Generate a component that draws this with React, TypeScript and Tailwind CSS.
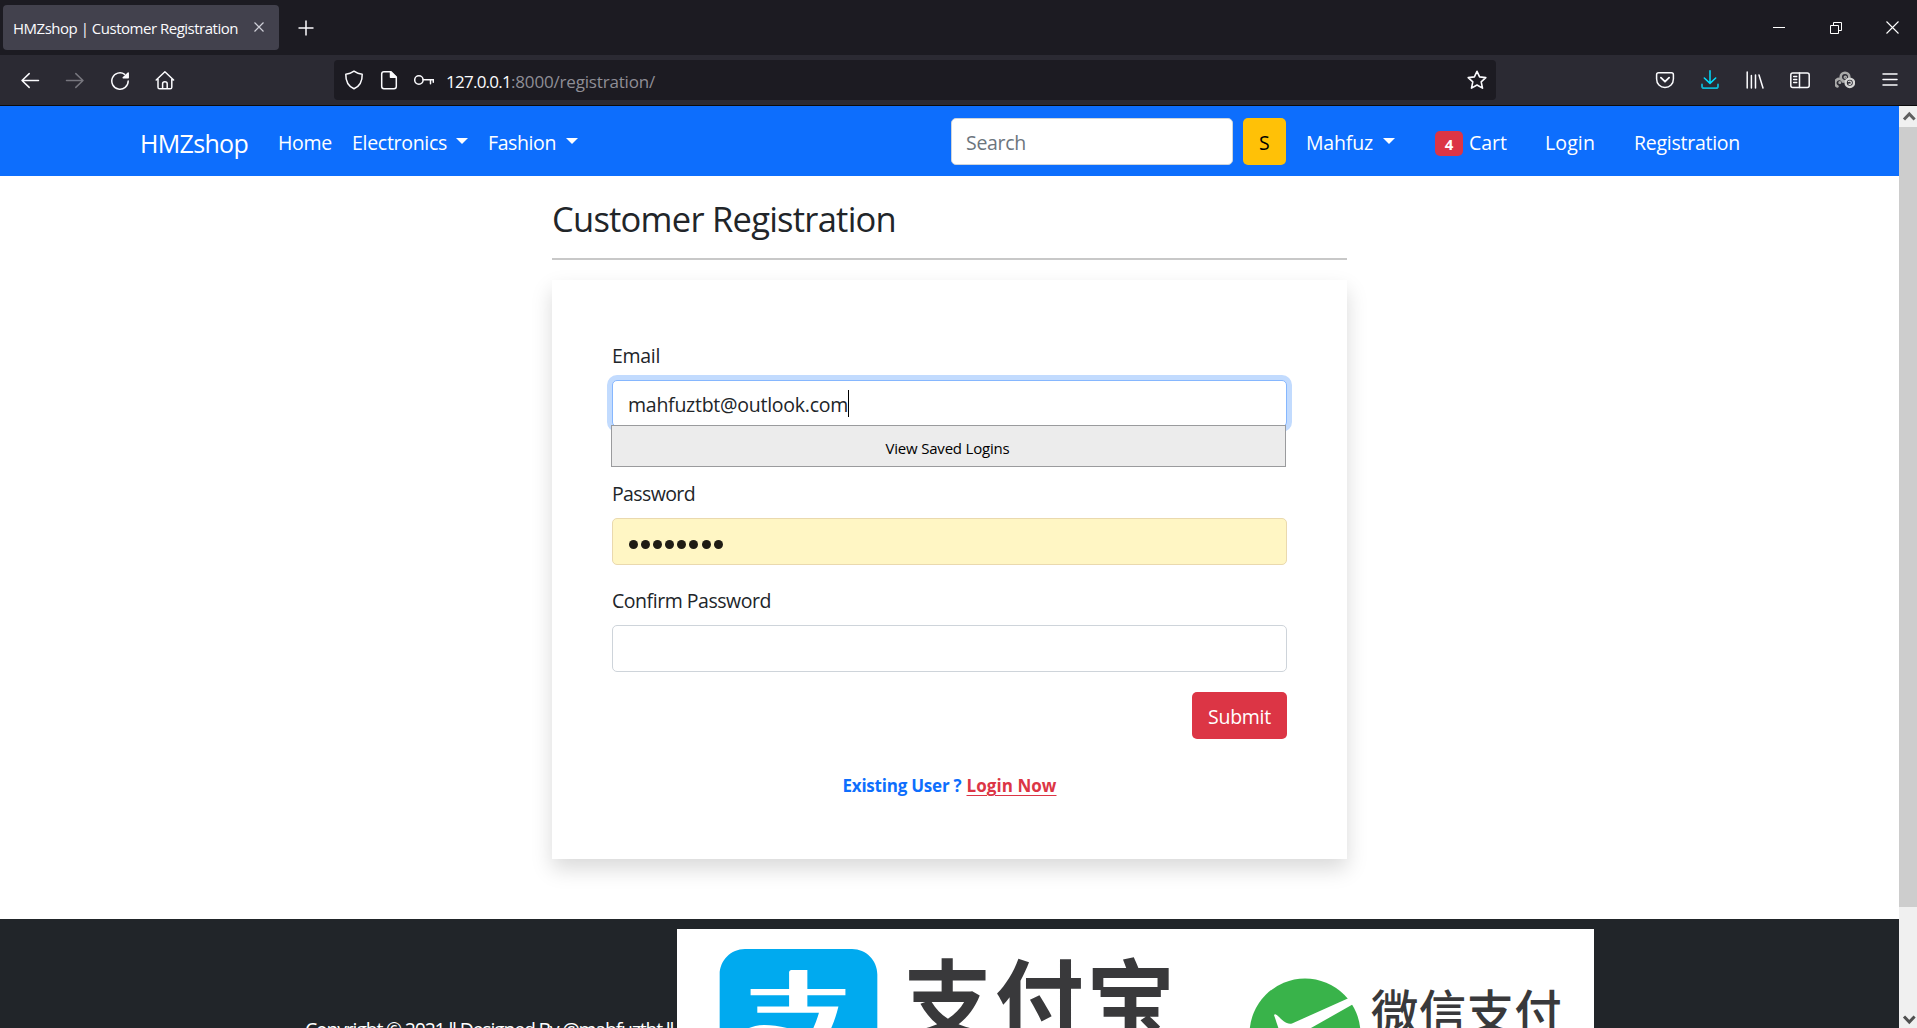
import { useLayoutEffect, useRef, useState } from "react";
import type { ReactNode } from "react";
import { SiAlipay } from "react-icons/si";

/** One line of text whose tracking is adjusted so that it fills an exact width. */
function Line({ w, className = "", children }: { w: number; className?: string; children: string }) {
  const ref = useRef<HTMLSpanElement>(null);
  const [tracking, setTracking] = useState(0);
  useLayoutEffect(() => {
    const el = ref.current;
    if (!el) return;
    el.style.letterSpacing = "0px";
    const natural = el.getBoundingClientRect().width;
    const next = (w - natural) / children.length;
    el.style.letterSpacing = `${next}px`;
    setTracking(next);
  }, [w, children]);
  return (
    <span ref={ref} className={`inline-block shrink-0 whitespace-nowrap ${className}`} style={{ letterSpacing: tracking }}>
      {children}
    </span>
  );
}

function Icon({ size = 20, children, className = "" }: { size?: number; children: ReactNode; className?: string }) {
  return (
    <svg
      width={size}
      height={size}
      viewBox={`0 0 ${size} ${size}`}
      fill="none"
      stroke="currentColor"
      strokeWidth="1.5"
      strokeLinecap="round"
      strokeLinejoin="round"
      className={`shrink-0 ${className}`}
    >
      {children}
    </svg>
  );
}

function ToolButton({ children }: { children: ReactNode }) {
  return <button className="flex h-10 w-[45px] shrink-0 items-center justify-center text-[#fbfbfe]">{children}</button>;
}

function Caret({ className = "" }: { className?: string }) {
  return <span className={`border-x-6 border-t-6 border-x-transparent border-t-white ${className}`} />;
}

function TabStrip() {
  return (
    <div className="flex h-[55px] items-start bg-[#1c1b22] pl-[3px] pt-[5px] text-[#fbfbfe]">
      <div className="flex h-[45px] w-[276px] items-center rounded-[4px] bg-[#42414d] pl-2.5 pt-0.5">
        <Line w={225} className="text-[15px]">HMZshop | Customer Registration</Line>
        <svg width="10" height="10" viewBox="0 0 10 10" stroke="#cfcfd8" strokeWidth="1.2" className="mb-[3px] ml-[16px]">
          <path d="M.5.5l9 9M9.5.5l-9 9" />
        </svg>
      </div>
      <svg width="16" height="16" viewBox="0 0 16 16" stroke="currentColor" strokeWidth="1.5" className="ml-[19px] mt-[15px]">
        <path d="M8 .5v15M.5 8h15" />
      </svg>
      <div className="-mt-[5px] ml-auto flex h-[55px] w-[167px] items-center">
        <div className="flex w-[57px] justify-center">
          <span className="h-px w-3 bg-white" />
        </div>
        <div className="flex w-[57px] justify-center">
          <svg width="12" height="12" viewBox="0 0 12 12" fill="none" stroke="white" strokeWidth="1">
            <path d="M.5 3.5h8v8h-8zM3.5 3.5v-3h8v8h-3" />
          </svg>
        </div>
        <div className="flex w-[53px] justify-center pl-[3px]">
          <svg width="13" height="13" viewBox="0 0 13 13" stroke="white" strokeWidth="1.1">
            <path d="M.5.5l12 12M12.5.5l-12 12" />
          </svg>
        </div>
      </div>
    </div>
  );
}

function Toolbar() {
  return (
    <div className="flex h-[51px] items-start border-b border-[#0c0c0d] bg-[#2b2a33] pl-[7px] pr-[5px] pt-[5px] text-[#fbfbfe]">
      <ToolButton>
        <Icon>
          <path d="M18.5 10.5H2M9.2 3.6L2 10.5l7.2 6.9" />
        </Icon>
      </ToolButton>
      <ToolButton>
        <Icon className="text-[#77767e]">
          <path d="M1.5 10.5H18M10.8 3.6l7.2 6.9-7.2 6.9" />
        </Icon>
      </ToolButton>
      <ToolButton>
        <Icon>
          <path d="M18.2 11A8.2 8.2 0 1 1 14.7 4.3" />
          <path d="M18.2 3v4.8h-5z" fill="currentColor" />
        </Icon>
      </ToolButton>
      <ToolButton>
        <Icon>
          <path d="M1.2 10L9.900 1.800 18.600 10M3 9v8.200c0 1 .6 1.600 1.600 1.600h10.600c1 0 1.600-.6 1.600-1.600V9M7.600 18.500V13.700c0-1.200.8-2 2.300-2s2.300.8 2.300 2v4.800" />
        </Icon>
      </ToolButton>
      <div className="ml-[147px] flex h-10 w-[1162px] items-center rounded-[4px] bg-[#1c1b22] pl-2.5">
        <Icon className="mr-[15px]">
          <path d="M10 1.200c2.300 1.700 5 2.700 8.200 3 .2 6.600-2.300 11.900-8.200 14.600C4.100 16.100 1.600 10.800 1.800 4.200 5 3.900 7.700 2.900 10 1.200z" />
        </Icon>
        <Icon className="mr-[15px]">
          <path d="M12 1.800H5C3.500 1.800 2.700 2.600 2.700 4v12.500c0 1.400.8 2.200 2.300 2.200h10c1.500 0 2.300-.8 2.300-2.200V7z" />
          <path d="M11.500 2v5.300h5.500z" fill="currentColor" />
        </Icon>
        <Icon>
          <circle cx="4.900" cy="10" r="4.200" />
          <path d="M9.200 9.700h10.300M16.500 9.700v4M19.300 9.700v2.500" />
        </Icon>
        <div className="ml-[12px] pt-1 text-[17px] leading-6">
          <Line w={65}>127.0.0.1</Line>
          <Line w={144} className="text-[#8f8e96]">:8000/registration/</Line>
        </div>
        <Icon className="ml-auto mr-[9px]">
          <path d="M10 1.300l2.600 5.600 6.200.7-4.600 4.200 1.300 6.300-5.500-3.100-5.500 3.100 1.300-6.300L1.200 7.600l6.200-.7z" strokeWidth="1.600" />
        </Icon>
      </div>
      <div className="ml-auto flex">
        <ToolButton>
          <Icon>
            <path d="M3.600 2.700h12.800c1.200 0 2 .8 2 2V9c0 4.700-3.500 8.400-8.400 8.400S1.600 13.700 1.600 9V4.700c0-1.200.8-2 2-2z" />
            <path d="M5.900 7.700L10 11.700l4.100-4" strokeWidth="1.800" />
          </Icon>
        </ToolButton>
        <ToolButton>
          <Icon className="text-[#00ddff]">
            <path d="M10 .8v12.400M4.300 8l5.700 5.400L15.700 8" />
            <path d="M2 14.500v1.800c0 1.200.7 1.900 1.900 1.900h12.200c1.200 0 1.900-.7 1.900-1.900v-1.800" stroke="#0fb5d2" strokeWidth="1.800" />
          </Icon>
        </ToolButton>
        <ToolButton>
          <Icon>
            <path d="M2.200 2v16M6.400 5.500V18M10.500 5V18M14 5l4 13" />
          </Icon>
        </ToolButton>
        <ToolButton>
          <Icon>
            <rect x=".8" y="3" width="18.400" height="14.500" rx="2" />
            <path d="M9.500 3v14.500M3.700 6.500h3M3.700 9.500h3M3.700 12.500h3" />
          </Icon>
        </ToolButton>
        <ToolButton>
          <Icon className="text-[#a9a9a9]">
            <path d="M2.500 16.500A4 4 0 1 1 8 11.500" strokeWidth="2.600" />
            <circle cx="4.800" cy="12.500" r=".8" />
            <circle cx="10" cy="7" r="4.300" strokeWidth="2.600" />
            <circle cx="10.300" cy="7.300" r="1.100" strokeWidth="1.400" />
            <circle cx="14.800" cy="12.800" r="4.200" fill="#2b2a33" stroke="#d6d6d6" strokeWidth="2.400" />
            <path d="M13.500 11.500c1.500-1 3 0 2.800 1.500s-1.800 1.600-2.300 1" stroke="#dcdcdc" strokeWidth="1.300" />
          </Icon>
        </ToolButton>
        <ToolButton>
          <Icon>
            <path d="M3 4h14M3 9.500h14M3 15h14" />
          </Icon>
        </ToolButton>
      </div>
    </div>
  );
}

function Navbar() {
  return (
    <nav className="flex h-[70px] items-center bg-[#0d6efd] pl-[140px] text-[19.5px] leading-[30px] text-white">
      <Line w={108} className="pt-1 text-[25px]">HMZshop</Line>
      <Line w={54} className="ml-[30px] pt-[3px]">Home</Line>
      <Line w={95} className="ml-[20px] pt-[3px]">Electronics</Line>
      <Caret className="mb-px ml-[9px]" />
      <Line w={68} className="ml-[20px] pt-[3px]">Fashion</Line>
      <Caret className="mb-px ml-[10px]" />
      <div className="ml-auto flex h-[47px] w-[282px] items-center rounded-[5px] border border-[#ced4da] bg-white pl-[14px] pt-[3px] text-[#6c757d]">
        <Line w={60}>Search</Line>
      </div>
      <button className="ml-2.5 flex h-[47px] w-[43px] items-center justify-center rounded-[5px] bg-[#ffc107] pt-[3px] text-black">
        <Line w={11}>S</Line>
      </button>
      <Line w={67} className="ml-[20px] pt-[3px]">Mahfuz</Line>
      <Caret className="mb-px ml-[10px]" />
      <span className="ml-[40px] mt-1 flex h-[25px] w-7 items-center justify-center rounded-[5px] bg-[#dc3545] pt-0.5 text-[15px] font-bold leading-none">4</span>
      <Line w={38} className="ml-[6px] pt-[3px]">Cart</Line>
      <Line w={50} className="ml-[38px] pt-[3px]">Login</Line>
      <Line w={106} className="ml-[39px] mr-[159px] pt-[3px]">Registration</Line>
    </nav>
  );
}

function RegistrationForm() {
  return (
    <main className="ml-[552px] flex h-[743px] w-[795px] shrink-0 flex-col text-[#212529]">
      <h1 className="mt-[18px] flex h-[64px] items-start text-[34.5px] leading-[50px]">
        <Line w={344}>Customer Registration</Line>
      </h1>
      <hr className="h-0.5 border-0 bg-[#c8c8c8]" />
      <form className="mt-5 flex h-[579px] flex-col bg-white px-[60px] text-[19.5px] leading-[30px] shadow-[0_10px_20px_rgba(0,0,0,0.15)]">
        <label className="mt-[61px]">
          <Line w={48}>Email</Line>
        </label>
        <div className="relative mt-[9px] h-[47px] rounded-[5px] border border-[#86b7fe] bg-white shadow-[0_0_0_5px_#c2dbfe]">
          <div className="flex h-full items-center pl-[15px] pt-[3px]">
            <Line w={220}>mahfuztbt@outlook.com</Line>
            <span className="-mt-1 h-[27px] w-px bg-black" />
          </div>
          <div className="absolute -left-0.5 top-[44px] flex h-[42px] w-[675px] items-center justify-center border border-[#9a9b9d] bg-[#ececec] pr-0.5 pt-[3px] text-[15px] text-black">
            <Line w={124}>View Saved Logins</Line>
          </div>
        </div>
        <label className="mt-[52px]">
          <Line w={83}>Password</Line>
        </label>
        <div className="mt-[9px] flex h-[47px] items-center gap-[3.1px] rounded-[5px] border border-[#ead9ae] bg-[#fff6c4] pl-[16px] pt-[5px]">
          {Array.from({ length: 8 }, (_, i) => (
            <span key={i} className="size-[9px] rounded-full bg-[#1f1c14]" />
          ))}
        </div>
        <label className="mt-[21px]">
          <Line w={159}>Confirm Password</Line>
        </label>
        <div className="mt-[9px] h-[47px] rounded-[5px] border border-[#ced4da]" />
        <button type="button" className="mt-5 flex h-[47px] w-[95px] items-center justify-center self-end rounded-[5px] bg-[#dc3545] pt-0.5 text-white">
          <Line w={63}>Submit</Line>
        </button>
        <div className="mt-[32px] flex justify-center text-[17px] font-bold text-[#0d6efd]">
          <Line w={119}>Existing User ?</Line>
          <a className="ml-[5px] text-[#dc3545]">
            <Line w={90} className="underline decoration-1 underline-offset-[3px]">Login Now</Line>
          </a>
        </div>
      </form>
    </main>
  );
}

function PaymentBanner() {
  return (
    <div className="flex h-[300px] w-[917px] items-start bg-white pl-[42px] pt-5 font-['Noto_Sans_CJK_SC',sans-serif] text-[#39393b]">
      <SiAlipay size={159} color="#00aaef" className="shrink-0" />
      <div className="ml-[25px] mt-[-13px] text-[89px] font-bold leading-[120px]">
        <Line w={275}>支付宝</Line>
      </div>
      <svg width="112" height="112" viewBox="0 0 112 112" className="ml-[71px] mt-[29px] shrink-0">
        <circle cx="56" cy="56" r="55.500" fill="#39b34a" />
        <path d="M25 37c1-2 3 0 4 1 4 4 9 9 14 7.500L101 19.500l6 5L62 50 39 62c-6 3-8-8-14-25z" fill="white" />
      </svg>
      <div className="ml-[10px] mt-[26px] text-[47.5px] font-medium leading-[70px]">
        <Line w={191}>微信支付</Line>
      </div>
    </div>
  );
}

function Footer() {
  return (
    <footer className="flex h-[109px] items-start overflow-hidden bg-[#212529] pl-[305px] pt-2.5 text-white">
      <Line w={372} className="mt-[86px] whitespace-pre text-[19.5px] leading-[30px]">Copyright © 2021 ll Designed By @mahfuztbt ll </Line>
      <PaymentBanner />
    </footer>
  );
}

function ScrollBar() {
  return (
    <div className="flex w-[18px] shrink-0 flex-col items-center bg-[#f0f0f0]">
      <svg width="18" height="21" viewBox="0 0 18 21" fill="none" stroke="#606060" strokeWidth="3" className="shrink-0">
        <path d="M5 13.500l5.300-5.500 5.300 5.500" />
      </svg>
      <div className="h-[780px] w-full bg-[#cdcdcd]" />
      <svg width="18" height="18" viewBox="0 0 18 18" fill="none" stroke="#505050" strokeWidth="3" className="mt-auto shrink-0">
        <path d="M5 6.500l5.300 5.500L15.600 6.500" />
      </svg>
    </div>
  );
}

export default function App() {
  return (
    <div className="flex h-[1028px] w-[1917px] flex-col overflow-hidden bg-white font-['Open_Sans','Noto_Sans',sans-serif]">
      <TabStrip />
      <Toolbar />
      <div className="flex min-h-0 flex-1">
        <div className="flex w-[1899px] flex-col">
          <Navbar />
          <RegistrationForm />
          <Footer />
        </div>
        <ScrollBar />
      </div>
    </div>
  );
}
